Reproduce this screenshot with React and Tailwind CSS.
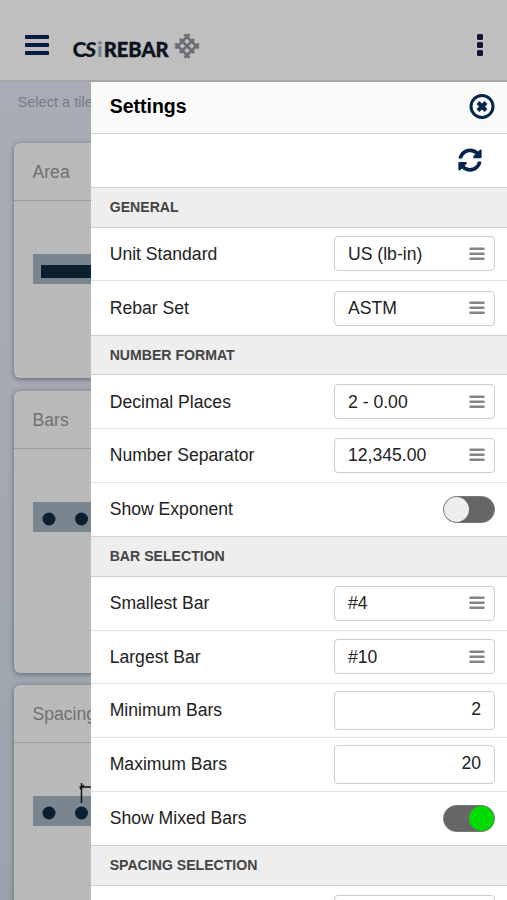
import React from 'react';

const sections = [
  {
    title: 'GENERAL',
    rows: [
      { label: 'Unit Standard', type: 'select', value: 'US (lb-in)' },
      { label: 'Rebar Set', type: 'select', value: 'ASTM' },
    ],
  },
  {
    title: 'NUMBER FORMAT',
    rows: [
      { label: 'Decimal Places', type: 'select', value: '2 - 0.00' },
      { label: 'Number Separator', type: 'select', value: '12,345.00' },
      { label: 'Show Exponent', type: 'toggle', value: false },
    ],
  },
  {
    title: 'BAR SELECTION',
    rows: [
      { label: 'Smallest Bar', type: 'select', value: '#4' },
      { label: 'Largest Bar', type: 'select', value: '#10' },
      { label: 'Minimum Bars', type: 'number', value: '2' },
      { label: 'Maximum Bars', type: 'number', value: '20' },
      { label: 'Show Mixed Bars', type: 'toggle', value: true },
    ],
  },
  {
    title: 'SPACING SELECTION',
    rows: [{ label: '', type: 'select', value: '' }],
  },
];

function Logo() {
  return (
    <svg width="130" height="32" viewBox="72 30 130 32" fontFamily="Lato, sans-serif" fontWeight="900">
      <text x="72.500" y="57.300" fontSize="21.5" fill="#0b1420">
        C<tspan x="85" fontStyle="italic">S</tspan><tspan x="97" fill="#6d8790">i</tspan><tspan x="103.700" textLength="65" lengthAdjust="spacingAndGlyphs" stroke="#0b1420" strokeWidth="0.4">REBAR</tspan>
      </text>
      <g transform="translate(187 46) rotate(45)" stroke="#6a6e73" strokeWidth="2.8">
        <path d="M-6.500-10v20M0-10v20M6.500-10v20M-10-6.500h20M-10 0h20M-10 6.500h20" />
      </g>
    </svg>
  );
}

function Tile({ title, className, children }) {
  return (
    <div className={`w-[480px] rounded-md bg-[#bababa] shadow-[0_1px_5px_rgba(0,0,0,0.4)] ${className}`}>
      <div className="h-[58px] border-b border-[#9c9c9c] pt-[2px] pl-[19px] flex items-center text-[17.600px] text-[#707070]">{title}</div>
      {children}
    </div>
  );
}

function Control({ type, value }) {
  if (type === 'toggle') {
    return (
      <div className={`w-[52px] h-[27px] rounded-full bg-[#666] border border-[#777] flex ${value ? 'justify-end' : 'justify-start'}`}>
        <div className={`size-[25px] rounded-full ${value ? 'bg-[#00dc00]' : 'bg-[#eee]'}`} />
      </div>
    );
  }
  if (type === 'number') {
    return (
      <div className="w-[161px] h-[39px] rounded-[4px] border border-[#ccc] pr-[13px] pb-[3px] flex items-center justify-end">{value}</div>
    );
  }
  return (
    <div className="w-[161px] h-[35px] rounded-[4px] border border-[#ccc] pl-[13px] pr-[9px] flex items-center justify-between">
      <span>{value}</span>
      <svg width="16" height="14" viewBox="0 0 16 14" stroke="#858585" strokeWidth="2.500" strokeLinecap="round">
        <path d="M1.500 1.700h13M1.500 6.700h13M1.500 11.700h13" />
      </svg>
    </div>
  );
}

export default function App() {
  return (
    <div className="relative w-[507px] h-[900px] overflow-hidden bg-linear-to-b from-[#abadb6] to-[#9aa4ae] font-['Liberation_Sans',Arial,sans-serif]">
      <header className="h-[82px] bg-[#bfbfbf] border-b-2 border-[#a6a6a6] flex items-center pt-[10px] pl-[25px] pr-[24px]">
        <div className="w-[24px] flex flex-col gap-[4px]">
          <div className="h-[4px] rounded-[1px] bg-[#001c40]" />
          <div className="h-[4px] rounded-[1px] bg-[#001c40]" />
          <div className="h-[4px] rounded-[1px] bg-[#001c40]" />
        </div>
        <div className="ml-[23px] pt-px">
          <Logo />
        </div>
        <div className="ml-auto flex flex-col gap-[2px]">
          <div className="size-[6px] rounded-[1.500px] bg-[#10143a]" />
          <div className="size-[6px] rounded-[1.500px] bg-[#10143a]" />
          <div className="size-[6px] rounded-[1.500px] bg-[#10143a]" />
        </div>
      </header>

      <main className="pl-[13.500px]">
        <p className="h-[61px] pt-[10px] pl-[4px] text-[14.600px] leading-[21px] text-[#787a80]">Select a tile</p>
        <Tile title="Area" className="h-[235px]">
          <svg className="ml-[19px] mt-[53px]" width="400" height="30">
            <rect width="400" height="30" fill="#798690" />
            <rect x="8" y="11" width="392" height="13" fill="#0c1f2e" />
          </svg>
        </Tile>
        <Tile title="Bars" className="h-[282px] mt-[13px]">
          <svg className="ml-[19px] mt-[53px]" width="400" height="30">
            <rect width="400" height="30" fill="#798690" />
            <circle cx="16" cy="17" r="6.5" fill="#0c1f2e" />
            <circle cx="48.500" cy="17" r="6.5" fill="#0c1f2e" />
          </svg>
        </Tile>
        <Tile title="Spacing" className="h-[282px] mt-[12px]">
          <svg className="ml-[19px] mt-[40px]" width="400" height="43">
            <rect y="13" width="400" height="30" fill="#798690" />
            <circle cx="16" cy="30" r="6.5" fill="#0c1f2e" />
            <circle cx="48.500" cy="30" r="6.5" fill="#0c1f2e" />
            <path d="M48.500 0v20M46.500 4h20M47 6l4-4" stroke="#111" strokeWidth="1.500" />
          </svg>
        </Tile>
      </main>

      <aside className="absolute left-[91.400px] top-[82px] right-0 bottom-0 bg-white overflow-hidden text-[17.600px] text-[#222]">
        <div className="h-[52px] bg-[#fafafa] border-b border-[#d4d7da] pl-[18.300px] pr-[12px] pb-[2px] flex items-center justify-between">
          <h1 className="text-[19.500px] font-bold text-black">Settings</h1>
          <svg width="26" height="26" viewBox="0 0 26 26" fill="none" stroke="#03244d">
            <circle cx="13" cy="12.500" r="11" strokeWidth="3" />
            <path d="M9 8.500l8 8M17 8.500l-8 8" strokeWidth="4" />
          </svg>
        </div>
        <div className="h-[53px] pr-[25px] pb-[2px] flex items-center justify-end">
          <svg width="24" height="24" viewBox="0 0 512 512" fill="#03244d">
            <path d="M370.72 133.280C339.458 104.008 298.888 87.962 255.848 88c-77.458.068-144.328 53.178-162.791 126.850-1.344 5.363-6.122 9.150-11.651 9.150H24.103c-7.498 0-13.194-6.807-11.807-14.176C33.933 94.924 134.813 8 256 8c66.448 0 126.791 26.136 171.315 68.685L463.030 40.970C478.149 25.851 504 36.559 504 57.941V192c0 13.255-10.745 24-24 24H345.941c-21.382 0-32.090-25.851-16.971-40.971l41.750-41.749zM32 296h134.059c21.382 0 32.090 25.851 16.971 40.971l-41.750 41.750c31.262 29.273 71.835 45.319 114.876 45.280 77.418-.070 144.315-53.144 162.787-126.849 1.344-5.363 6.122-9.150 11.651-9.150h57.304c7.498 0 13.194 6.807 11.807 14.176C478.067 417.076 377.187 504 256 504c-66.448 0-126.791-26.136-171.315-68.685L48.970 471.030C33.851 486.149 8 475.441 8 454.059V320c0-13.255 10.745-24 24-24z" />
          </svg>
        </div>
        {sections.map(section => (
          <section key={section.title}>
            <h2 className="h-[40.500px] bg-[#eee] border-y border-[#d0d0d0] pt-[0.500px] pl-[18.300px] flex items-center text-[14.100px] font-bold text-[#444]">
              {section.title}
            </h2>
            {section.rows.map((row, i) => (
              <div
                key={row.label}
                className={`h-[53.700px] pl-[18.300px] pr-[12px] flex items-center justify-between ${i < section.rows.length - 1 ? 'border-b border-[#dfe2e5]' : ''}`}
              >
                <span>{row.label}</span>
                <Control type={row.type} value={row.value} />
              </div>
            ))}
          </section>
        ))}
      </aside>
    </div>
  );
}
